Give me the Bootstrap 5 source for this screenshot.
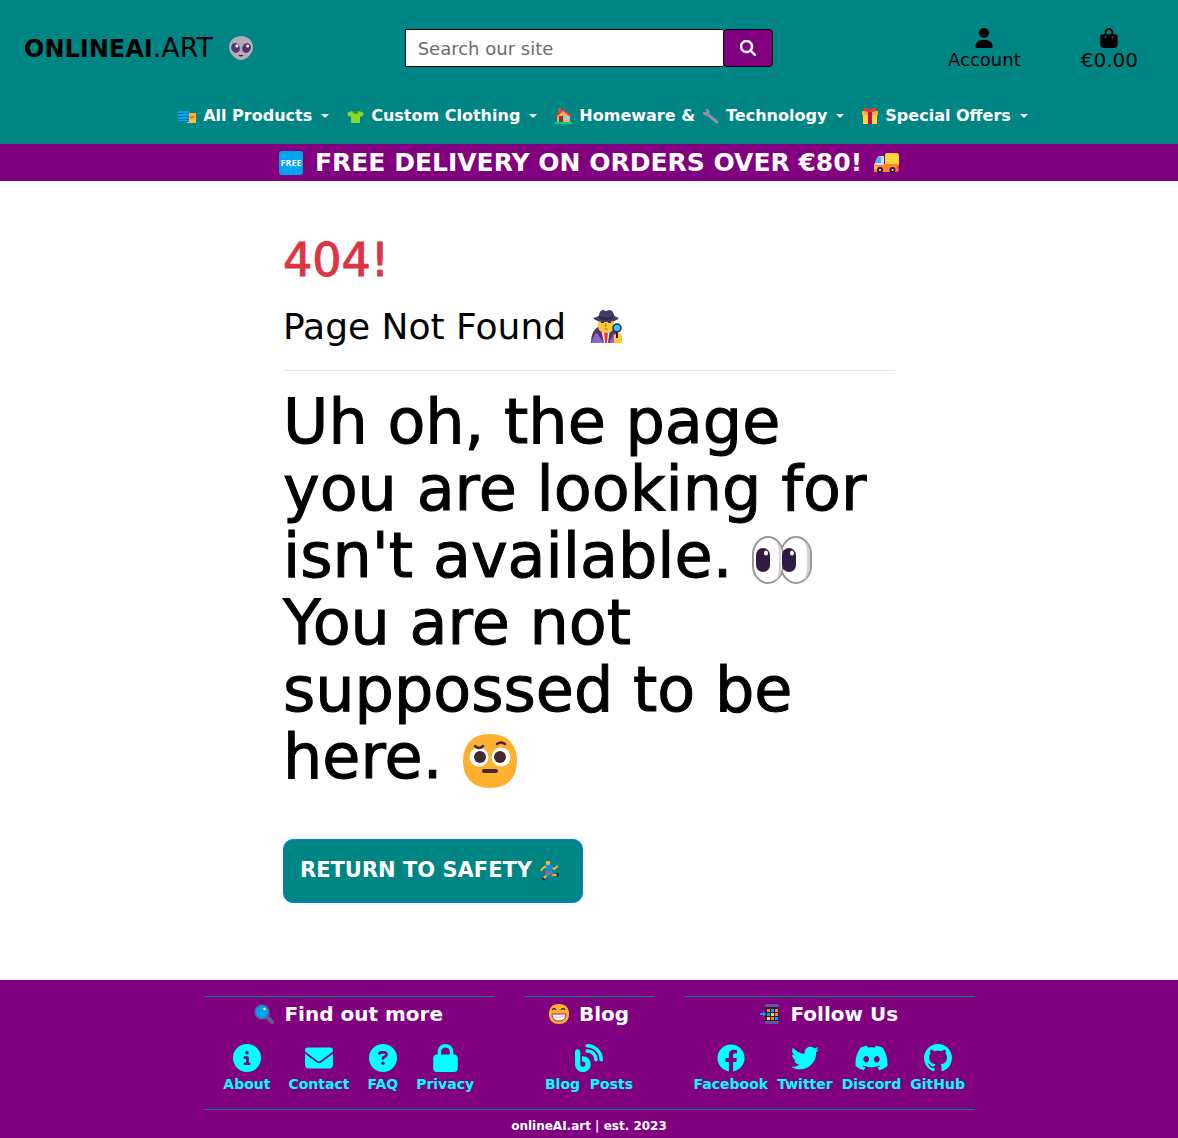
<!DOCTYPE html>
<html lang="en">
<head>
<meta charset="utf-8">
<meta name="viewport" content="width=device-width, initial-scale=1">
<title>onlineAI.art</title>
<link rel="stylesheet" href="https://cdn.jsdelivr.net/npm/bootstrap@5.3.0/dist/css/bootstrap.min.css">
<style>
  :root { --teal: #008585; --plum: #800080; --aqua: #00ffff; }
  body { font-family: "DejaVu Sans", Verdana, sans-serif; color: #000; background: #fff; }
  svg { display: block; flex: none; }
  .site-head { background: var(--teal); }
  .head-row { height: 96px; }
  .brand { font-size: 27px; line-height: 36px; color: #000; text-decoration: none; }
  .brand strong { font-size: 24px; }
  .search-box .form-control { height: 38px; border: 1px solid #000; border-right: 0; border-radius: 0; font-size: 18px; line-height: 24px; padding: 6px 12px; }
  .search-box .form-control::placeholder { color: #6c6c6c; opacity: 1; }
  .search-box .btn { flex: 0 0 50px; background: var(--plum); border: 1px solid #000; border-radius: 4px; color: #fff; }
  .tool-links { gap: 60px; padding-right: 40px; }
  .tool-links a { color: #000; text-decoration: none; font-size: 18px; line-height: 24px; }
  .tool-links .bag { font-size: 20px; }
  .main-nav { min-height: 48px; padding-bottom: 9px; padding-left: 28px; gap: 18px; }
  .main-nav button { background: none; border: 0; padding: 0; color: #fff; font-weight: 700; font-size: 16px; line-height: 24px; gap: 7px; }
  .main-nav .dropdown-toggle::after { margin-left: 2px; border-width: 4px 4px 0; }
  .promo { background: var(--plum); color: #fff; height: 37px; font-size: 25px; line-height: 36px; }
  .wide-gutter { --bs-gutter-x: 30px; }
  .lost { padding-top: 54px; padding-bottom: 77px; }
  .lost h1 { font-size: 46px; line-height: 50px; color: #dc3545; margin-bottom: 17px; -webkit-text-stroke: 1px; }
  .lost h2 { font-size: 36px; line-height: 50px; margin: 0; font-weight: 400; }
  .lost hr { margin: 18px 0 17px; border-color: #000; opacity: .1; }
  .lost .message { font-size: 62px; line-height: 67px; margin-bottom: 49px; -webkit-text-stroke: 1px; }
  .safety { background: var(--teal); border: 1px solid #007bff; border-radius: 10px; color: #fff; height: 64px; padding: 0 22px 0 16px; font-size: 21px; text-decoration: none; }
  .site-foot { background: var(--plum); color: #fff; padding-top: 16px; }
  .foot-cols { gap: 30px; }
  .foot-wide { flex: 29 1 0; }
  .foot-slim { flex: 13 1 0; }
  .foot-top { border-top: 1px solid var(--teal); }
  .site-foot h2 { font-size: 20px; line-height: 24px; margin: 5px 0 18px; font-weight: 700; gap: 10px; }
  .foot-links a { color: var(--aqua); font-size: 14px; line-height: 20px; font-weight: 700; text-decoration: none; gap: 2px; white-space: nowrap; }
  .foot-links svg { height: 28px; }
  .gap-a { gap: 18px; }
  .gap-b { gap: 9px; }
  .copy { border-top: 1px solid var(--teal); margin-top: 15px; font-size: 12px; line-height: 18px; padding: 7px 0 3px; font-weight: 700; }
</style>
</head>
<body>
<header class="site-head">
  <div class="row g-0 align-items-center head-row">
    <div class="col-4 ps-4">
      <a class="brand d-inline-flex align-items-center" href="#"><span><strong>ONLINEAI</strong>.ART</span>
        <svg class="ms-3" width="24" height="24" viewBox="0 0 24 24" aria-hidden="true"><path d="M12 0c7 0 12 5 12 11.500C24 17 18 24 12 24S0 17 0 11.500C0 5 5 0 12 0z" fill="#b4acbc"/><g fill="#533566"><ellipse cx="6.500" cy="12" rx="4.200" ry="5" transform="rotate(-25 6.500 12)"/><ellipse cx="17.500" cy="12" rx="4.200" ry="5" transform="rotate(25 17.500 12)"/></g><circle cx="7.800" cy="10" r="1.500" fill="#fff"/><circle cx="18.600" cy="10" r="1.500" fill="#fff"/><path d="M9.500 19q2.500 3 5 0z" fill="#321b41"/></svg>
      </a>
    </div>
    <div class="col-4 px-2">
      <form class="d-flex search-box px-1" role="search">
        <input class="form-control" type="search" placeholder="Search our site" aria-label="Search our site">
        <button class="btn d-flex align-items-center justify-content-center p-0" type="button" aria-label="Search"><svg width="16" height="16" viewBox="0 0 512 512" fill="currentColor"><path d="M416 208c0 45.900-14.900 88.300-40 122.700L502.600 457.400c12.500 12.500 12.500 32.800 0 45.300s-32.800 12.500-45.300 0L330.700 376c-34.400 25.200-76.800 40-122.700 40C93.100 416 0 322.900 0 208S93.100 0 208 0S416 93.100 416 208zM208 352a144 144 0 1 0 0-288 144 144 0 1 0 0 288z" stroke="currentColor" stroke-width="16"/></svg></button>
      </form>
    </div>
    <div class="col-4">
      <div class="d-flex justify-content-end tool-links">
        <a class="d-flex flex-column align-items-center pt-1" href="#"><svg width="18" height="20" viewBox="0 0 448 512"><path d="M224 256A128 128 0 1 0 224 0a128 128 0 1 0 0 256zm-45.700 48C79.800 304 0 383.800 0 482.300C0 498.700 13.300 512 29.700 512H418.300c16.400 0 29.700-13.300 29.700-29.700C448 383.800 368.200 304 269.700 304H178.300z"/></svg>Account</a>
        <a class="bag d-flex flex-column align-items-center pt-1" href="#"><svg width="18" height="20" viewBox="0 0 448 512"><path d="M160 112c0-35.300 28.700-64 64-64s64 28.700 64 64v48H160V112zm-48 48H48c-26.500 0-48 21.500-48 48V416c0 53 43 96 96 96H352c53 0 96-43 96-96V208c0-26.500-21.500-48-48-48H336V112C336 50.100 285.900 0 224 0S112 50.100 112 112v48zm24 48a24 24 0 1 1 0 48 24 24 0 1 1 0-48zm152 24a24 24 0 1 1 48 0 24 24 0 1 1 -48 0z"/></svg>€0.00</a>
      </div>
    </div>
  </div>
  <nav class="main-nav d-flex flex-wrap justify-content-center align-items-center" aria-label="Shop">
    <button class="dropdown-toggle d-flex align-items-center" type="button"><svg width="18" height="16" viewBox="0 0 18 16"><path d="M9 5h9v10H9z" fill="#ffb02e"/><path d="M9 12h9v3H9z" fill="#f9c23c"/><path d="M0 3h11v11H0z" fill="#0074ba"/><path d="M0 3h11v2H0zM0 6h11v2H0zM0 9h11v2H0zM0 12h11v1H0z" fill="#00a6ed"/><path d="M12 9q2 2 4-1" stroke="#f8312f" fill="none"/></svg>All Products</button>
    <button class="dropdown-toggle d-flex align-items-center" type="button"><svg width="17" height="16" viewBox="0 0 17 16"><path d="M5 3h7l5 2-2 4-2-1v7H4V8L2 9 0 5z" fill="#86d72f"/><path d="M5 3h7q-1 3-3.500 3T5 3z" fill="#44911b"/></svg>Custom Clothing</button>
    <button class="dropdown-toggle d-flex align-items-center" type="button"><svg width="17" height="16" viewBox="0 0 17 16"><path d="M3 0h3v6H3z" fill="#a56953"/><path d="M2 8l6.500-6L15 8v7H2z" fill="#f3ad61"/><path d="M0 8l8-7 9 7-1.500 1L8 3 1.500 9z" fill="#f92f30"/><path d="M4 8h4v7H4z" fill="#6d4534"/><path d="M10 8h4v4h-4z" fill="#8ad0ff"/><path d="M0 14h17v2H0z" fill="#00d26a"/></svg>Homeware &amp; <svg width="17" height="16" viewBox="0 0 17 16"><path d="M5 6l10 8" stroke="#998ea4" stroke-width="3" stroke-linecap="round"/><path d="M4 1q4 1 3 4t-3 2Q1 7 1 4l3 1 1-1z" fill="#998ea4" stroke="#998ea4"/></svg>Technology</button>
    <button class="dropdown-toggle d-flex align-items-center" type="button"><svg width="16" height="16" viewBox="0 0 16 16"><path d="M1 6h14v10H1z" fill="#fcd53f"/><path d="M0 3h16v4H0z" fill="#ffb02e"/><path d="M6 3h4v13H6z" fill="#ca0b4a"/><path d="M8 4Q0 4 2 1c2-3 5 0 6 2 1-2 4-5 6-2 2 3-6 3-6 3z" fill="#f8312f"/></svg>Special Offers</button>
  </nav>
</header>
<div class="promo d-flex align-items-center justify-content-center fw-bold">
  <svg class="me-2" width="24" height="24" viewBox="0 0 24 24"><rect width="24" height="24" rx="3" fill="#00a6ed"/><text x="12" y="15" text-anchor="middle" font-family="Open Sans, sans-serif" font-weight="700" font-size="9" fill="#fff">FREE</text></svg>
  <span class="mx-1">FREE DELIVERY ON ORDERS OVER €80!</span>
  <svg class="ms-2" width="25" height="24" viewBox="0 1 25 20"><path d="M11 3q0-2 2-2h9q3 0 3 3v11H11z" fill="#fcd53f"/><path d="M0 12h25v5q0 3-3 3H0z" fill="#ff822d"/><path d="M0 13l3-7q1-2 3-2h4v9z" fill="#e1d8ec"/><path d="M1 11l2-5q1-1 2-1h2v6z" fill="#3cb9fa"/><path d="M0 14h3v3H0z" fill="#fcd53f"/><path d="M23 14h2v3h-2z" fill="#f8312f"/><g fill="#fff" stroke="#321b41" stroke-width="2"><circle cx="6" cy="18" r="2"/><circle cx="18.500" cy="18" r="2"/></g></svg>
</div>
<main class="container wide-gutter lost">
  <div class="row justify-content-center">
    <div class="col-8">
      <h1>404!</h1>
      <h2 class="d-flex align-items-center">Page Not Found
        <svg class="ms-4" width="32" height="34" viewBox="0 0 32 34"><path d="M1 33q0-14 9-17h13q6 3 6 17z" fill="#533566"/><path d="M2 33q1-9 5-10l7 10zM28 33q0-9-4-10l-5 10z" fill="#8d65c5"/><path d="M11 19h9l-2 14h-4z" fill="#f3eef8"/><path d="M14 22l2-2 2 2-1 11h-2z" fill="#f8312f"/><path d="M8 9h16v6q0 8-8 8t-8-8z" fill="#ffc83d"/><path d="M11 12h3M18 12h3" stroke="#402a32" stroke-width="2"/><path d="M16 13l-1 3h2M14 19h4" stroke="#d67d00" fill="none"/><path d="M3 8q5-1 6-3 1-5 4-5l3 1 3-1q4 0 5 5 1 2 5 3-3 4-13 4T3 8z" fill="#433b6b"/><path d="M9 6q7 3 14 0v3q-7 2-14 0z" fill="#37234c"/><path d="M24 25l6-2 2 3v6q-1 2-8 1z" fill="#ffc83d"/><path d="M27 22v6" stroke="#321b41" stroke-width="2"/><circle cx="27" cy="18" r="4" fill="#26c9fc" stroke="#321b41" stroke-width="1.500"/></svg>
      </h2>
      <hr>
      <p class="message">Uh oh, the page<br>you are looking for<br>isn't available. <svg class="d-inline-block align-middle" width="60" height="48" viewBox="0 0 60 48"><g stroke="#999" stroke-width="2" fill="#fff"><path d="M44 1c8 0 15 8 15 17v12c0 9-7 17-15 17s-15-8-15-17V18C29 9 36 1 44 1z"/><path d="M16 1c8 0 15 8 15 17v12c0 9-7 17-15 17S1 39 1 30V18C1 9 8 1 16 1z"/></g><path d="M23 4c4 2 7 8 7 14v12c0 7-3 12-7 15 3-4 4-9 4-15V18c0-6-1-10-4-14zM51 4c4 2 7 8 7 14v12c0 7-3 12-7 15 3-4 4-9 4-15V18c0-6-1-10-4-14z" fill="#d3d3d3"/><path d="M29 14q4 10 0 20" fill="#fff"/><rect x="4" y="12" width="14" height="24" rx="7" fill="#321b41"/><rect x="30" y="12" width="14" height="24" rx="7" fill="#321b41"/><ellipse cx="14" cy="17" rx="2" ry="2.500" fill="#fff"/><ellipse cx="40" cy="17" rx="2" ry="2.500" fill="#fff"/></svg><br>You are not<br>suppossed to be<br>here. <svg class="d-inline-block align-middle" width="56" height="56" viewBox="0 0 56 56"><path d="M28 1c19 0 27 12 27 27S47 55 28 55 1 43 1 28 9 1 28 1z" fill="#ffb02e"/><circle cx="17" cy="24" r="9.500" fill="#fff"/><circle cx="39" cy="24" r="9.500" fill="#fff"/><circle cx="18" cy="24" r="6" fill="#402a32"/><circle cx="38" cy="24" r="6" fill="#402a32"/><path d="M13 13q4 4 8 0M35 11q4-3 8 0" fill="none" stroke="#402a32" stroke-width="2.500" stroke-linecap="round"/><path d="M22 38h12" stroke="#402a32" stroke-width="4" stroke-linecap="round"/></svg></p>
      <a class="safety d-inline-flex align-items-center fw-bold" href="#">RETURN TO SAFETY
        <svg class="ms-2" width="20" height="20" viewBox="0 0 20 20"><path d="M8 11l-2 4-3 3" stroke="#ffb02e" stroke-width="2" fill="none"/><path d="M10 11l3 3 4 0" stroke="#ffb02e" stroke-width="2" fill="none"/><path d="M7 5L3 7 1 10M11 6l3 2 4-3" stroke="#ffb02e" stroke-width="2" fill="none"/><path d="M6 4h6l1 5-4 3-3-2z" fill="#0090e8"/><path d="M6 9l6 1 1 4-3 0-3 1-2-1z" fill="#7d7296"/><circle cx="8" cy="2" r="2.300" fill="#ffb02e"/><path d="M2 17l3 2M17 12l1 3" stroke="#321b41" stroke-width="2"/></svg>
      </a>
    </div>
  </div>
</main>
<footer class="site-foot">
  <div class="container wide-gutter">
    <div class="row justify-content-center"><div class="col-10">
      <div class="d-flex foot-cols">
        <div class="foot-wide foot-top">
          <h2 class="d-flex justify-content-center align-items-center"><svg width="20" height="20" viewBox="0 0 20 20"><path d="M13 13l5 5" stroke="#635994" stroke-width="4" stroke-linecap="round"/><circle cx="8" cy="8" r="7" fill="#00a6ed" stroke="#635994" stroke-width="1.500"/><circle cx="10.500" cy="5" r="1.200" fill="#fff"/></svg>Find out more</h2>
          <div class="foot-links gap-a d-flex justify-content-center">
            <a class="d-flex flex-column align-items-center" href="#"><svg width="28" viewBox="0 0 512 512" fill="currentColor"><path d="M256 512A256 256 0 1 0 256 0a256 256 0 1 0 0 512zM216 336h24V272H216c-13.300 0-24-10.700-24-24s10.700-24 24-24h48c13.300 0 24 10.700 24 24v88h8c13.300 0 24 10.700 24 24s-10.700 24-24 24H216c-13.300 0-24-10.700-24-24s10.700-24 24-24zm40-208a32 32 0 1 1 0 64 32 32 0 1 1 0-64z"/></svg>About</a>
            <a class="d-flex flex-column align-items-center" href="#"><svg width="28" viewBox="0 0 512 512" fill="currentColor"><path d="M48 64C21.500 64 0 85.500 0 112c0 15.100 7.100 29.300 19.200 38.400L236.800 313.600c11.400 8.500 27 8.500 38.400 0L492.800 150.400c12.100-9.100 19.200-23.300 19.200-38.400c0-26.500-21.500-48-48-48H48zM0 176V384c0 35.300 28.700 64 64 64H448c35.300 0 64-28.700 64-64V176L294.400 339.200c-22.800 17.100-54 17.100-76.800 0L0 176z"/></svg>Contact</a>
            <a class="d-flex flex-column align-items-center" href="#"><svg width="28" viewBox="0 0 512 512" fill="currentColor"><path d="M256 512A256 256 0 1 0 256 0a256 256 0 1 0 0 512zM169.800 165.300c7.900-22.300 29.100-37.300 52.800-37.300h58.300c34.900 0 63.100 28.300 63.100 63.100c0 22.600-12.100 43.500-31.700 54.800L280 264.400c-.2 13-10.900 23.600-24 23.600c-13.300 0-24-10.700-24-24V250.500c0-8.600 4.600-16.500 12.100-20.800l44.300-25.400c4.700-2.700 7.600-7.700 7.600-13.100c0-8.400-6.800-15.100-15.100-15.100H222.600c-3.400 0-6.400 2.100-7.500 5.300l-.4 1.200c-4.400 12.500-18.200 19-30.600 14.600s-19-18.200-14.600-30.600l.4-1.200zM224 352a32 32 0 1 1 64 0 32 32 0 1 1 -64 0z"/></svg>FAQ</a>
            <a class="d-flex flex-column align-items-center" href="#"><svg width="25" viewBox="0 0 448 512" fill="currentColor"><path d="M144 144v48H304V144c0-44.200-35.800-80-80-80s-80 35.800-80 80zM80 192V144C80 64.500 144.500 0 224 0s144 64.500 144 144v48h16c35.300 0 64 28.700 64 64V448c0 35.300-28.700 64-64 64H64c-35.300 0-64-28.700-64-64V256c0-35.300 28.700-64 64-64H80z"/></svg>Privacy</a>
          </div>
        </div>
        <div class="foot-slim foot-top">
          <h2 class="d-flex justify-content-center align-items-center"><svg width="20" height="20" viewBox="0 0 20 20"><path d="M10 0c7 0 10 4 10 10s-3 10-10 10S0 16 0 10 3 0 10 0z" fill="#ffb02e"/><path d="M3 6q2-3 4 0M12 6q2-3 4 0" fill="none" stroke="#402a32" stroke-width="1.300"/><path d="M3 10h14q0 7-7 7t-7-7z" fill="#fff" stroke="#bb1d80"/><path d="M4 13h12" stroke="#cdc4d6"/></svg>Blog</h2>
          <div class="foot-links d-flex justify-content-center">
            <a class="d-flex flex-column align-items-center" href="#"><svg width="28" viewBox="0 0 512 512" fill="currentColor"><path d="M192 32c0 17.700 14.300 32 32 32c123.700 0 224 100.300 224 224c0 17.700 14.300 32 32 32s32-14.300 32-32C512 128.900 383.100 0 224 0c-17.700 0-32 14.300-32 32zm0 96c0 17.700 14.300 32 32 32c70.700 0 128 57.300 128 128c0 17.700 14.300 32 32 32s32-14.300 32-32c0-106-86-192-192-192c-17.700 0-32 14.300-32 32zM96 144c0-26.500-21.500-48-48-48S0 117.500 0 144V368c0 79.500 64.500 144 144 144s144-64.500 144-144s-64.500-144-144-144H128v96h16c26.500 0 48 21.500 48 48s-21.500 48-48 48s-48-21.500-48-48V144z"/></svg>Blog&nbsp; Posts</a>
          </div>
        </div>
        <div class="foot-wide foot-top">
          <h2 class="d-flex justify-content-center align-items-center"><svg width="20" height="20" viewBox="0 0 20 20"><rect x="5" width="14" height="20" rx="2" fill="#635994"/><path d="M5 3h14v14H5z" fill="#321b41"/><path d="M7 5h3v3H7zM15 5h3v3h-3z" fill="#ff822d"/><path d="M11 5h3v3h-3zM7 9h3v3H7zM15 13h3v3h-3z" fill="#00a6ed"/><path d="M11 9h3v3h-3zM7 13h3v3H7z" fill="#fcd53f"/><path d="M15 9h3v3h-3zM11 13h3v3h-3z" fill="#ff822d"/><path d="M0 9h3V7l3 3-3 3v-2H0z" fill="#00a6ed"/></svg>Follow Us</h2>
          <div class="foot-links gap-b d-flex justify-content-center">
            <a class="d-flex flex-column align-items-center" href="#"><svg width="28" viewBox="0 0 512 512" fill="currentColor"><path d="M504 256C504 119 393 8 256 8S8 119 8 256c0 123.780 90.690 226.380 209.250 245V327.690h-63V256h63v-54.640c0-62.150 37-96.480 93.670-96.480 27.140 0 55.520 4.840 55.520 4.840v61h-31.280c-30.800 0-40.410 19.120-40.410 38.730V256h68.780l-11 71.690h-57.780V501C413.310 482.380 504 379.780 504 256z"/></svg>Facebook</a>
            <a class="d-flex flex-column align-items-center" href="#"><svg width="28" viewBox="0 0 512 512" fill="currentColor"><path d="M459.370 151.716c.325 4.548.325 9.097.325 13.645 0 138.720-105.583 298.558-298.558 298.558-59.452 0-114.680-17.219-161.137-47.106 8.447.974 16.568 1.299 25.340 1.299 49.055 0 94.213-16.568 130.274-44.832-46.132-.975-84.792-31.188-98.112-72.772 6.498.974 12.995 1.624 19.818 1.624 9.421 0 18.843-1.300 27.614-3.573-48.081-9.747-84.143-51.980-84.143-102.985v-1.299c13.969 7.797 30.214 12.670 47.431 13.319-28.264-18.843-46.781-51.005-46.781-87.391 0-19.492 5.197-37.360 14.294-52.954 51.655 63.675 129.300 105.258 216.365 109.807-1.624-7.797-2.599-15.918-2.599-24.040 0-57.828 46.782-104.934 104.934-104.934 30.213 0 57.502 12.670 76.670 33.137 23.715-4.548 46.456-13.320 66.599-25.340-7.798 24.366-24.366 44.833-46.132 57.827 21.117-2.273 41.584-8.122 60.426-16.243-14.292 20.791-32.161 39.308-52.628 54.253z"/></svg>Twitter</a>
            <a class="d-flex flex-column align-items-center" href="#"><svg width="33" viewBox="0 1 16 14" fill="currentColor"><path d="M13.545 2.907a13.227 13.227 0 0 0-3.257-1.011.05.05 0 0 0-.052.025c-.141.25-.297.577-.406.833a12.190 12.190 0 0 0-3.658 0 8.258 8.258 0 0 0-.412-.833.051.051 0 0 0-.052-.025c-1.125.194-2.220.534-3.257 1.011a.041.041 0 0 0-.021.018C.356 6.024-.213 9.047.066 12.032c.001.014.01.028.021.037a13.276 13.276 0 0 0 3.995 2.020.05.05 0 0 0 .056-.019c.308-.42.582-.863.818-1.329a.05.05 0 0 0-.01-.059.051.051 0 0 0-.018-.011 8.875 8.875 0 0 1-1.248-.595.05.05 0 0 1-.02-.066.051.051 0 0 1 .015-.019c.084-.063.168-.129.248-.195a.05.05 0 0 1 .051-.007c2.619 1.196 5.454 1.196 8.041 0a.052.052 0 0 1 .053.007c.08.066.164.132.248.195a.051.051 0 0 1-.004.085 8.254 8.254 0 0 1-1.249.594.05.05 0 0 0-.03.03.052.052 0 0 0 .003.041c.24.465.515.909.817 1.329a.05.05 0 0 0 .056.019 13.235 13.235 0 0 0 4.001-2.020.049.049 0 0 0 .021-.037c.334-3.451-.559-6.449-2.366-9.106a.034.034 0 0 0-.02-.019Zm-8.198 7.307c-.789 0-1.438-.724-1.438-1.612 0-.889.637-1.613 1.438-1.613.807 0 1.450.73 1.438 1.613 0 .888-.637 1.612-1.438 1.612Zm5.316 0c-.788 0-1.438-.724-1.438-1.612 0-.889.637-1.613 1.438-1.613.807 0 1.451.73 1.438 1.613 0 .888-.631 1.612-1.438 1.612Z"/></svg>Discord</a>
            <a class="d-flex flex-column align-items-center" href="#"><svg width="28" viewBox="0 0 16 16" fill="currentColor"><path d="M8 0C3.580 0 0 3.580 0 8c0 3.540 2.290 6.530 5.470 7.590.4.07.55-.17.55-.38 0-.19-.01-.82-.01-1.490-2.010.37-2.530-.49-2.690-.94-.09-.23-.48-.94-.82-1.130-.28-.15-.68-.52-.01-.53.63-.01 1.080.58 1.230.82.72 1.210 1.870.87 2.330.66.07-.52.28-.87.51-1.070-1.780-.2-3.640-.89-3.640-3.950 0-.87.31-1.590.82-2.150-.08-.2-.36-1.020.08-2.120 0 0 .67-.21 2.200.82.64-.18 1.320-.27 2-.27.68 0 1.360.09 2 .27 1.530-1.040 2.200-.82 2.200-.82.44 1.100.16 1.920.08 2.120.51.56.82 1.270.82 2.150 0 3.070-1.870 3.750-3.650 3.950.29.25.54.73.54 1.480 0 1.070-.01 1.930-.01 2.200 0 .21.15.46.55.38A8.012 8.012 0 0 0 16 8c0-4.420-3.580-8-8-8z"/></svg>GitHub</a>
          </div>
        </div>
      </div>
      <div class="copy text-center">onlineAI.art | est. 2023</div>
    </div></div>
  </div>
</footer>
<script src="https://cdn.jsdelivr.net/npm/bootstrap@5.3.0/dist/js/bootstrap.bundle.min.js"></script>
</body>
</html>
